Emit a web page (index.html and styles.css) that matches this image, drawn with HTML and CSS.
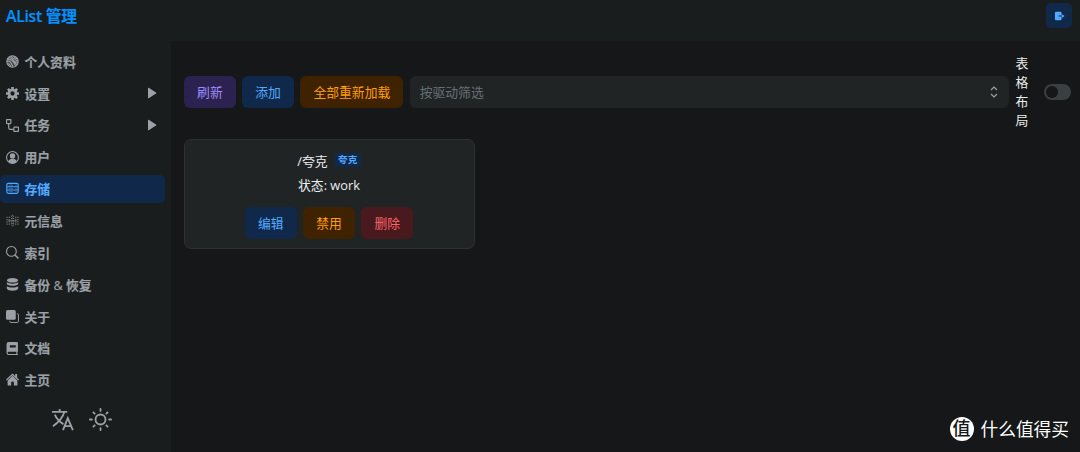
FILE: index.html
```
<!DOCTYPE html>
<html lang="zh-CN">
<head>
  <meta charset="UTF-8" />
  <meta name="viewport" content="width=device-width, initial-scale=1.0" />
  <title>AList 管理</title>
  <link rel="stylesheet" href="styles.css">
</head>
<body>
  <!-- Header -->
  <header class="header">
    <h1 class="title">AList 管理</h1>
    <button class="logout" aria-label="logout">
      <svg viewBox="0 0 24 24" fill="currentColor"><path d="M4 2h10a3 3 0 0 1 3 3v4.500h-7v5h7V19a3 3 0 0 1-3 3H4a3 3 0 0 1-3-3V5a3 3 0 0 1 3-3z"/><path d="M9 11h9.500V7.500L24 12l-5.500 4.500V13H9z"/></svg>
    </button>
  </header>

  <div class="layout">
    <!-- Sidebar -->
    <aside class="sidebar">
      <nav class="menu">
        <a class="item">
          <svg class="icon" viewBox="0 0 24 24" fill="none" stroke="currentColor" stroke-width="2"><circle cx="12" cy="12" r="10.500" fill="currentColor" fill-opacity=".3"/><path d="M4 6c5-3 8 2 16 12M9 2c3 5 8 6 13 9M2 12c5-3 8 3 11 10M3 8c7-1 12 6 15 12M2 17c4-2 6 1 7 5M14 2c1 3 4 4 7 5M15 12l7 2"/></svg>
          <span>个人资料</span>
        </a>
        <a class="item">
          <svg class="icon" viewBox="0 0 24 24" fill="none" stroke="currentColor"><circle cx="12" cy="12" r="6.500" stroke-width="5"/><path d="M12 0v5M12 19v5M0 12h5M19 12h5M3.500 3.500 7 7M17 17l3.500 3.500M3.500 20.500 7 17M17 7l3.500-3.500" stroke-width="4.800"/></svg>
          <span>设置</span>
          <svg class="arrow" viewBox="0 0 10 12" fill="currentColor"><path d="M1 1.200v9.600q0 .8.700.4l7.300-4.700q.6-.5 0-1L1.700.8Q1 .4 1 1.200z"/></svg>
        </a>
        <a class="item">
          <svg class="icon" viewBox="0 0 24 24" fill="none" stroke="currentColor" stroke-width="2.200"><rect x="1" y="1" width="8" height="7.500" rx="1"/><rect x="14.500" y="15" width="8.500" height="8" rx="1"/><path d="M5 8v8q0 3 3 3h6"/></svg>
          <span>任务</span>
          <svg class="arrow" viewBox="0 0 10 12" fill="currentColor"><path d="M1 1.200v9.600q0 .8.700.4l7.300-4.700q.6-.5 0-1L1.700.8Q1 .4 1 1.200z"/></svg>
        </a>
        <a class="item">
          <svg class="icon" viewBox="0 0 24 24" fill="currentColor"><circle cx="12" cy="12" r="11" fill="none" stroke="currentColor" stroke-width="2"/><circle cx="12" cy="9" r="5"/><path d="M4 19c2-4 5-4.500 8-4.500s6 .5 8 4.500c-4 5-12 5-16 0z"/></svg>
          <span>用户</span>
        </a>
        <a class="item selected">
          <svg class="icon" viewBox="0 0 24 24" fill="none" stroke="currentColor" stroke-width="2"><rect x="1.500" y="2.500" width="21" height="18.500" rx="3"/><path d="M2 8.700h20M2 14.800h20"/><path d="M5 5.800h8M5 11.800h8M5 17.900h8M17 5.800h3M17 11.800h3M17 17.900h3" stroke-width="1.300" opacity=".7"/></svg>
          <span>存储</span>
        </a>
        <a class="item">
          <svg class="icon meta" viewBox="0 0 24 24" fill="none" stroke="currentColor" stroke-width="2"><path d="M2 5v15M6 5v15M10 3v18M14 3v18M18 5v15M22 5v15" stroke-dasharray="2.200 2"/><path d="M12 1v22" stroke-width="1.200" stroke-dasharray="3 2"/><path d="M4 12.500h16" stroke-width="1.500"/></svg>
          <span>元信息</span>
        </a>
        <a class="item">
          <svg class="icon" viewBox="0 0 24 24" fill="none" stroke="currentColor" stroke-width="2"><circle cx="10" cy="10" r="9"/><path d="m16.500 16.500 6.500 6.500" stroke-width="2.800"/></svg>
          <span>索引</span>
        </a>
        <a class="item">
          <svg class="icon" viewBox="0 0 24 24" fill="currentColor"><ellipse cx="12" cy="4.200" rx="10.500" ry="4.200"/><path d="M1.500 8c4 3.500 17 3.500 21 0v3c-2 4.500-19 4.500-21 0zM1.500 15c4 3.500 17 3.500 21 0v4.500c-2 5.500-19 5.500-21 0z"/></svg>
          <span>备份 <i class="amp">&amp;</i> 恢复</span>
        </a>
        <a class="item">
          <svg class="icon" viewBox="0 0 24 24" fill="currentColor"><rect x="0" y="0" width="18" height="18" rx="3"/><path d="M20 7h1a2 2 0 0 1 2 2v12a2 2 0 0 1-2 2H9a2 2 0 0 1-2-2v-1" fill="none" stroke="currentColor" stroke-width="1.800"/></svg>
          <span>关于</span>
        </a>
        <a class="item">
          <svg class="icon" viewBox="0 0 24 24" fill="currentColor" fill-rule="evenodd"><path d="M5 0h15a2 2 0 0 1 2 2v16h-1v4h1v2H5a4 4 0 0 1-4-4V4a4 4 0 0 1 4-4zm2 6v4h11V6zM5 18a2 2 0 0 0 0 4h14v-4z"/></svg>
          <span>文档</span>
        </a>
        <a class="item">
          <svg class="icon" viewBox="0 0 24 24" fill="currentColor"><path d="M12 1 0 12l1.500 1.700L12 4l10.500 9.700L24 12l-3.500-3.200V2h-3.500v3.600z"/><path d="m12 5-9 9v9h6.500v-7h5v7H21v-9z"/></svg>
          <span>主页</span>
        </a>
      </nav>
      <div class="tools">
        <svg viewBox="0 0 24 24" fill="none" stroke="currentColor" stroke-width="1.900"><path d="M1 4h16M9 1v3M4 7c2 5 6 8 9 10M14 4C12 11 8 15 2 19M12.500 23l5-12.500L22.800 23M14 19h7.500"/></svg>
        <svg viewBox="0 0 24 24" fill="none" stroke="currentColor" stroke-width="1.900" stroke-linecap="round"><circle cx="12" cy="12" r="5.200"/><path d="M12 1v2M12 21v2M1 12h2M21 12h2M4.600 4.600l1.300 1.300M18.100 18.100l1.300 1.300M4.600 19.400l1.300-1.300M18.100 5.900l1.300-1.300"/></svg>
      </div>
    </aside>

    <!-- Storages -->
    <main class="content">
      <div class="toolbar">
        <button class="btn purple">刷新</button>
        <button class="btn blue">添加</button>
        <button class="btn orange">全部重新加载</button>
        <div class="select">
          <span>按驱动筛选</span>
          <svg viewBox="0 0 8 12" fill="none" stroke="currentColor" stroke-width="1.200"><path d="m1 4 3-3 3 3M1 8l3 3 3-3"/></svg>
        </div>
        <label class="switch-label">表格布局</label>
        <div class="switch"></div>
      </div>

      <div class="card">
        <div class="name">/夸克 <span class="badge">夸克</span></div>
        <div class="status">状态: work</div>
        <div class="actions">
          <button class="btn blue">编辑</button>
          <button class="btn orange">禁用</button>
          <button class="btn red">删除</button>
        </div>
      </div>
    </main>
  </div>

  <div class="watermark"><b>值</b><span>什么值得买</span></div>
</body>
</html>
```
FILE: styles.css
```
* {
  margin: 0; padding: 0;
  box-sizing: border-box;
}
body {
  width: 1080px;
  height: 452px;
  overflow: hidden;
  display: flex;
  flex-direction: column;
  background: #151718;
  color: #ecedee;
  font-family: "Open Sans", "Noto Sans CJK SC", sans-serif;
  font-size: 12.8px;
}
.header {
  height: 41px;
  flex: none;
  display: flex;
  justify-content: space-between;
  padding: 3px 8px 0 6px;
  background: #1a1d1e;
}
.title {
  color: #0091ff;
  font-size: 15.8px;
  line-height: 26px;
  font-weight: 600;
  letter-spacing: -0.3px;
}
.title, .item {
  -webkit-text-stroke: 0.15px currentColor;
}
.logout {
  width: 26px;
  height: 25px;
  display: flex;
  align-items: center;
  justify-content: center;
  border: 0;
  border-radius: 5px;
  background: #10294b;
  color: #52a9ff;
}
.logout svg {
  width: 11px;
  height: 10px;
}
.layout {
  flex: 1;
  display: flex;
  min-height: 0;
}
.sidebar {
  width: 171px;
  flex: none;
  padding-top: 7px;
  background: #1a1d1e;
}
.menu {
  width: 165px;
  display: flex;
  flex-direction: column;
  gap: 3.85px;
}
.item {
  height: 28px;
  display: flex;
  align-items: center;
  padding: 0 8px 0 5.5px;
  border-radius: 5px;
  color: #9ba1a6;
  font-weight: 700;
  line-height: 28px;
}
.item span {
  margin-top: -0.5px;
}
.item.selected {
  background: #10294b;
  color: #52a9ff;
}
.icon {
  width: 13px;
  height: 13px;
  margin: -1px 6px 0 0;
}
.meta {
  opacity: 0.75;
}
.amp {
  font-style: normal;
  font-weight: 400;
}
.arrow {
  width: 10px;
  height: 12px;
  margin-left: auto;
  margin-top: -2px;
}
.tools {
  display: flex;
  gap: 15px;
  margin: 14px 0 0 51px;
  color: #9ba1a6;
}
.tools svg {
  width: 23px;
  height: 23px;
}
.content {
  flex: 1;
  padding: 12px 9px 0 13px;
}
.toolbar {
  display: flex;
  align-items: center;
  gap: 6.4px;
  height: 77px;
}
.btn {
  height: 32px;
  padding: 0 13.1px;
  border: 0;
  border-radius: 6px;
  font: inherit;
  line-height: 32px;
  white-space: nowrap;
}
.purple { background: #2c2250; color: #9e8cfc; }
.blue { background: #10294b; color: #52a9ff; }
.orange { background: #3f2200; color: #ff9f0a; }
.red { background: #481a1d; color: #ff6369; }
.select {
  flex: 1;
  height: 32px;
  display: flex;
  align-items: center;
  justify-content: space-between;
  padding: 0 11px 0 10px;
  border-radius: 6px;
  background: #202425;
  color: #697177;
}
.select svg {
  width: 8px;
  height: 12px;
  color: #9ba1a6;
}
.switch-label {
  width: 13px;
  margin-top: 1px;
  line-height: 19.2px;
}
.switch {
  width: 27px;
  height: 16px;
  margin-left: 9px;
  border-radius: 8px;
  background: #3a3f42;
}
.switch::before {
  content: "";
  display: block;
  width: 12px;
  height: 12px;
  margin: 2px;
  border-radius: 50%;
  background: #151718;
}
.card {
  width: 291px;
  height: 110px;
  margin-top: 9px;
  padding: 10px 1px 0 0;
  border: 1px solid #2d3133;
  border-radius: 7px;
  background: #202425;
  text-align: center;
}
.name {
  display: flex;
  align-items: center;
  justify-content: center;
  gap: 7px;
  height: 20px;
}
.badge {
  height: 14px;
  padding: 0 3.5px;
  border-radius: 2px;
  background: #10294b;
  color: #52a9ff;
  font-size: 9.6px;
  font-weight: 700;
  line-height: 14px;
}
.status {
  height: 20px;
  margin-top: 5px;
  line-height: 20px;
}
.actions {
  display: flex;
  justify-content: center;
  gap: 6.4px;
  margin-top: 12px;
}
/* site mark floats over the page */
.watermark {
  position: absolute;
  right: 11px;
  bottom: 10px;
  display: flex;
  align-items: center;
  gap: 7px;
  color: #fff;
  font-size: 17.7px;
  line-height: 26px;
}
.watermark b {
  width: 24px;
  height: 24px;
  border-radius: 50%;
  background: #fff;
  color: #151718;
  font-size: 18px;
  font-weight: 500;
  line-height: 23px;
  text-align: center;
}
```
